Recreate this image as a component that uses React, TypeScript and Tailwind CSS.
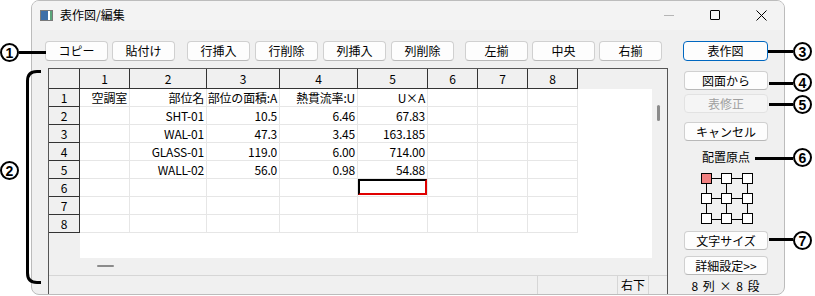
import React from "react";

const font = "font-['Noto_Sans_CJK_JP',sans-serif]";

const colWidths = [
  "w-[50px]",
  "w-[77px]",
  "w-[73px]",
  "w-[78px]",
  "w-[70px]",
  "w-[50px]",
  "w-[50px]",
  "w-[50px]",
];

const data: string[][] = [
  ["空調室", "部位名", "部位の面積:A", "熱貫流率:U", "U×A", "", "", ""],
  ["", "SHT-01", "10.5", "6.46", "67.83", "", "", ""],
  ["", "WAL-01", "47.3", "3.45", "163.185", "", "", ""],
  ["", "GLASS-01", "119.0", "6.00", "714.00", "", "", ""],
  ["", "WALL-02", "56.0", "0.98", "54.88", "", "", ""],
  ["", "", "", "", "", "", "", ""],
  ["", "", "", "", "", "", "", ""],
  ["", "", "", "", "", "", "", ""],
];

function Btn({
  children,
  className = "",
  disabled = false,
  focused = false,
}: {
  children: React.ReactNode;
  className?: string;
  disabled?: boolean;
  focused?: boolean;
}) {
  let look = "border-[#d0d0d0] border-b-[#b8b8b8] bg-[#fdfdfd] text-black";
  if (disabled) look = "border-[#e2e2e2] bg-[#f5f5f5] text-[#a0a0a0]";
  if (focused) look = "border-[#0067c0] bg-[#fdfdfd] text-black";
  return (
    <div
      className={`flex items-center justify-center rounded-[4px] border text-[12px] leading-none ${look} ${className}`}
    >
      {children}
    </div>
  );
}

function TitleIcon() {
  return (
    <svg width="13" height="11" viewBox="0 0 13 11">
      <rect x="0.5" y="0.5" width="12" height="10" fill="#e8e8e8" stroke="#7a7a7a" />
      <rect x="1" y="1" width="7" height="9" fill="#3f6fa8" />
      <rect x="8" y="1" width="2" height="9" fill="#ffffff" />
      <rect x="10" y="1" width="2" height="9" fill="#5aa57a" />
    </svg>
  );
}

function OriginGrid() {
  const pos = [0.5, 20.5, 41.5];
  return (
    <svg width="54" height="52" viewBox="0 0 54 52">
      {pos.map((y, i) => (
        <line key={"h" + i} x1="5" y1={y + 5} x2="47" y2={y + 5} stroke="#000" />
      ))}
      {pos.map((x, i) => (
        <line key={"v" + i} x1={x + 5} y1="5" x2={x + 5} y2="46" stroke="#000" />
      ))}
      {[0.5, 20.5, 40.5].map((y, r) =>
        pos.map((x, c) => (
          <rect
            key={`${r}-${c}`}
            x={x}
            y={y}
            width="10"
            height="10"
            fill={r === 0 && c === 0 ? "#f08080" : "#fff"}
            stroke="#000"
          />
        ))
      )}
    </svg>
  );
}

function Grid() {
  return (
    <div className="grid h-full w-[603px] grid-cols-[31px_1fr] grid-rows-[20px_1fr]">
      <div className="border-b border-r border-[#333]" />
      <div className="flex">
        {colWidths.map((w, i) => (
          <div
            key={i}
            className={`${w} h-[20px] border-b border-r border-[#333] text-center text-[12px] leading-[19px]`}
          >
            {i + 1}
          </div>
        ))}
      </div>
      <div className="flex flex-col">
        {data.map((_, i) => (
          <div
            key={i}
            className="h-[18px] border-b border-r border-[#333] text-center text-[12px] leading-[17px]"
          >
            {i + 1}
          </div>
        ))}
      </div>
      <div className="bg-white">
        {data.map((row, r) => (
          <div key={r} className="flex">
            {row.map((cell, c) => (
              <div
                key={c}
                className={`${colWidths[c]} h-[18px] border-b border-r border-[#e6e6e6] text-right text-[12px] leading-[17px] tracking-[-0.2px] whitespace-nowrap`}
              >
                {r === 5 && c === 4 ? (
                  <div className="h-[16px] w-[69px] border-2 border-[#e00000] border-l-black border-t-black" />
                ) : (
                  <span className="pr-[2px]">{cell}</span>
                )}
              </div>
            ))}
          </div>
        ))}
      </div>
    </div>
  );
}

// circled callout number
function Mark({ n, className }: { n: string; className: string }) {
  return (
    <div
      className={`absolute flex h-[19px] w-[19px] items-center justify-center rounded-full border-[2px] border-black font-['Liberation_Sans',sans-serif] text-[14px] font-bold leading-none ${className}`}
    >
      {n}
    </div>
  );
}

export default function App() {
  return (
    <div className={`relative h-[296px] w-[815px] overflow-hidden bg-white text-black ${font}`}>
      <div className="flex pl-[31px]">
        <div className="flex h-[295px] w-[754px] flex-col overflow-hidden rounded-[8px] border border-[#bcbcbc] bg-[#f0f0f0]">
          {/* title bar */}
          <div className="flex h-[30px] items-center bg-[#f3f3f3]">
            <div className="ml-[8px] flex">
              <TitleIcon />
            </div>
            <span className="ml-[7px] text-[12px]">表作図/編集</span>
            <div className="ml-auto flex h-full">
              <div className="flex w-[46px] items-center justify-center">
                <div className="h-px w-[10px] bg-[#b5b5b5]" />
              </div>
              <div className="flex w-[46px] items-center justify-center">
                <div className="h-[10px] w-[10px] rounded-[1px] border border-black" />
              </div>
              <div className="flex w-[46px] items-center justify-center">
                <svg width="11" height="11" viewBox="0 0 11 11">
                  <path d="M0.5 0.5 L10.5 10.5 M10.5 0.5 L0.5 10.5" stroke="#000" strokeWidth="1" />
                </svg>
              </div>
            </div>
          </div>

          {/* toolbar */}
          <div className="flex h-[39px] items-start pl-[13px] pt-[11px]">
            <div className="flex gap-[4px]">
              <Btn className="h-[20px] w-[63px]">コピー</Btn>
              <Btn className="h-[20px] w-[63px]">貼付け</Btn>
            </div>
            <div className="ml-[12px] flex gap-[5px]">
              <Btn className="h-[20px] w-[63px]">行挿入</Btn>
              <Btn className="h-[20px] w-[63px]">行削除</Btn>
              <Btn className="h-[20px] w-[63px]">列挿入</Btn>
              <Btn className="h-[20px] w-[63px]">列削除</Btn>
            </div>
            <div className="ml-[11px] flex gap-[4px]">
              <Btn className="h-[20px] w-[63px]">左揃</Btn>
              <Btn className="h-[20px] w-[63px]">中央</Btn>
              <Btn className="h-[20px] w-[63px]">右揃</Btn>
            </div>
            <Btn focused className="ml-[21px] h-[20px] w-[85px]">
              表作図
            </Btn>
          </div>

          {/* main */}
          <div className="flex flex-1 pl-[16px]">
            <div className="flex w-[620px] flex-col border-l border-r border-t border-[#555]">
              <div className="flex h-[189px]">
                <Grid />
                <div className="relative flex-1">
                  <div className="ml-[5px] mt-[36px] h-[16px] w-[3px] rounded-full bg-[#8b8b8b]" />
                </div>
              </div>
              <div className="h-[17px]">
                <div className="ml-[48px] mt-[7px] h-[2px] w-[17px] rounded-full bg-[#8b8b8b]" />
              </div>
              <div className="flex flex-1 border-t border-[#d6d6d6]">
                <div className="w-[489px] border-r border-[#d6d6d6]" />
                <div className="w-[80px] border-r border-[#d6d6d6]" />
                <div className="flex w-[31px] items-center justify-center border-r border-[#d6d6d6] text-[12px] leading-none">
                  右下
                </div>
              </div>
            </div>

            {/* right panel */}
            <div className="flex flex-1 flex-col items-center">
              <Btn className="mt-[3px] h-[19px] w-[84px]">図面から</Btn>
              <Btn disabled className="mt-[4px] h-[19px] w-[84px]">
                表修正
              </Btn>
              <Btn className="mt-[9px] h-[19px] w-[84px]">キャンセル</Btn>
              <div className="mt-[8px] h-[16px] text-[12px] leading-[16px]">配置原点</div>
              <div className="ml-[3px] mt-[8px] flex">
                <OriginGrid />
              </div>
              <Btn className="mt-[6px] h-[19px] w-[84px]">文字サイズ</Btn>
              <Btn className="mt-[6px] h-[19px] w-[84px]">詳細設定&gt;&gt;</Btn>
              <div className="mt-[3px] text-[12px] leading-[16px] tracking-[1px]">8 列 × 8 段</div>
            </div>
          </div>
        </div>
      </div>

      {/* callouts */}
      <Mark n="1" className="left-[0px] top-[43px]" />
      <div className="absolute left-[19px] top-[51px] h-[3px] w-[27px] bg-black" />

      <Mark n="2" className="left-[0px] top-[161px]" />
      <svg className="absolute left-[20px] top-[66px]" width="24" height="220" viewBox="0 0 24 220">
        <path
          d="M21 5.5 L17 5.5 Q7.5 5.5 7.5 15 L7.5 207 Q7.5 216.5 17 216.5 L21 216.5"
          fill="none"
          stroke="#000"
          strokeWidth="3"
        />
      </svg>

      <Mark n="3" className="left-[793px] top-[42px]" />
      <div className="absolute left-[768px] top-[50px] h-[3px] w-[25px] bg-black" />

      <Mark n="4" className="left-[793px] top-[73px]" />
      <div className="absolute left-[769px] top-[82px] h-[3px] w-[24px] bg-black" />

      <Mark n="5" className="left-[793px] top-[95px]" />
      <div className="absolute left-[769px] top-[103px] h-[3px] w-[24px] bg-black" />

      <Mark n="6" className="left-[793px] top-[148px]" />
      <div className="absolute left-[755px] top-[157px] h-[3px] w-[38px] bg-black" />

      <Mark n="7" className="left-[793px] top-[231px]" />
      <div className="absolute left-[769px] top-[238px] h-[3px] w-[24px] bg-black" />
    </div>
  );
}
